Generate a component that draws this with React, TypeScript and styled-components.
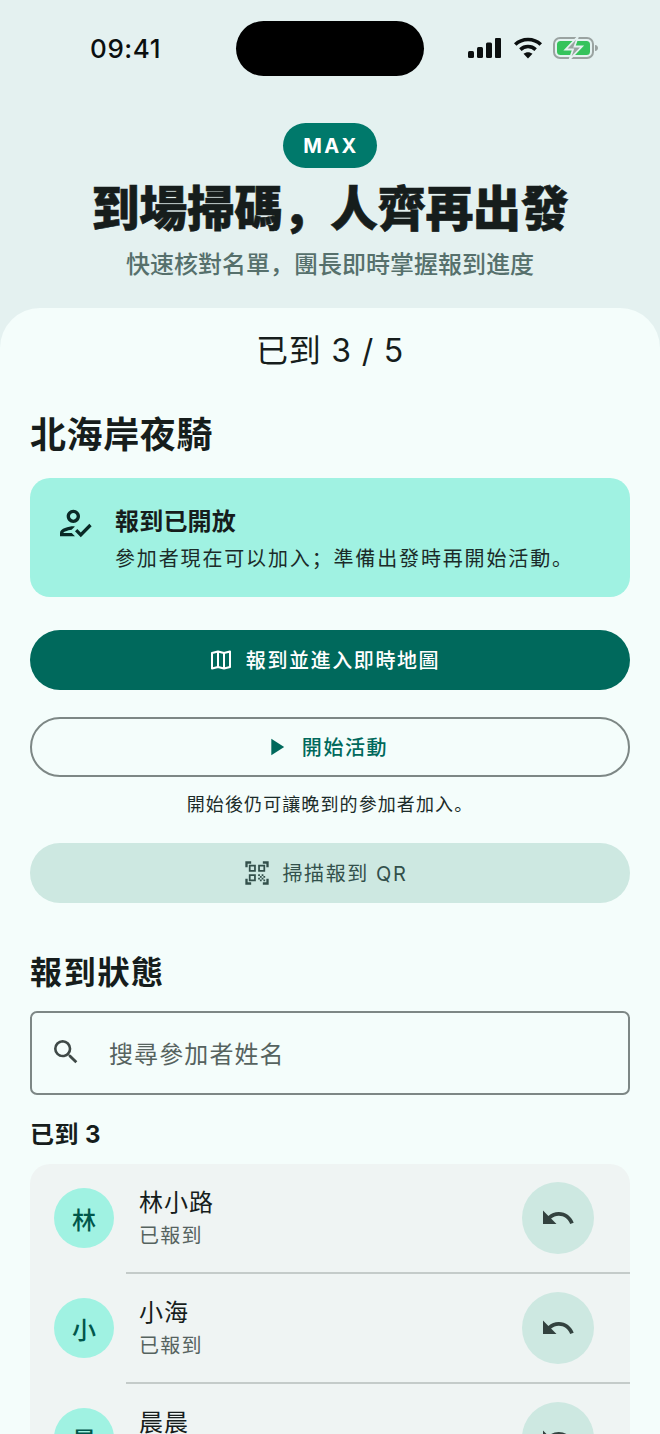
import React from "react";
import styled, { createGlobalStyle } from "styled-components";
import { MdOutlineHowToReg, MdPlayArrow, MdSearch, MdUndo, MdOutlineQrCodeScanner } from "react-icons/md";

const Global = createGlobalStyle`
  html, body { margin: 0; padding: 0; background: #e4f1f0; }
  body { width: 660px; height: 1434px; overflow: hidden; }
  * { box-sizing: border-box; }
`;
const FONT = `Inter, "Noto Sans CJK SC", sans-serif`;
const COMMA = "\uFF0C";
const SEMI = "\uFF1B";

const Page = styled.div`
  width: 660px; height: 1434px; overflow: hidden; background: #e4f1f0;
  font-family: ${FONT}; color: #161d1c;
`;
const StatusBar = styled.div`
  height: 97px; padding: 21px 62px 0 90px; display: flex; align-items: flex-start;
`;
const Time = styled.div`
  font-size: 26px; font-weight: 500; line-height: 55px; color: #0b0f0f; width: 146px; letter-spacing: 0.6px;
`;
const Island = styled.div`
  width: 188px; height: 55px; border-radius: 28px; background: #000;
`;
const StatusIcons = styled.div`
  display: flex; align-items: center; gap: 11px; height: 55px; margin-left: auto; padding-bottom: 1px;
`;
const Hero = styled.header`
  display: flex; flex-direction: column; align-items: center; padding-top: 26px; height: 211px;
`;
const Badge = styled.div`
  width: 94px; height: 45px; border-radius: 23px; background: #00796b; color: #fff;
  display: flex; align-items: center; justify-content: center;
  font-size: 20px; font-weight: 700; letter-spacing: 2.4px; padding-left: 2px;
`;
const Title = styled.h1`
  margin: 7px 0 0; font-size: 48px; line-height: 68px; font-weight: 900; color: #161d1c; white-space: nowrap;
  letter-spacing: -0.3px; -webkit-text-stroke: 0.6px #161d1c;
`;
const Subtitle = styled.p`
  margin: 1px 0 0; font-size: 24px; line-height: 42px; font-weight: 500; color: #56706c; white-space: nowrap;
`;
const Sheet = styled.main`
  background: #f4fdfb; border-radius: 40px 40px 0 0; padding: 19px 30px 0; height: 1126px;
`;
const Progress = styled.div`
  text-align: center; font-size: 32px; line-height: 48px; letter-spacing: 0.8px; color: #161d1c; font-weight: 400;
`;
const EventName = styled.h2`
  margin: 35px 0 0; font-size: 36px; line-height: 50px; font-weight: 700; letter-spacing: 0.6px;
`;
const Notice = styled.section`
  margin-top: 18px; height: 119px; border-radius: 20px; background: #a0f2e2; display: flex; padding: 25px 0 0 25px; gap: 20px;
`;
const NoticeIcon = styled(MdOutlineHowToReg)`
  font-size: 40px; color: #0a2a26; flex: none; margin-top: 0;
`;
const NoticeBody = styled.div`display: flex; flex-direction: column;`;
const NoticeTitle = styled.div`
  font-size: 24px; line-height: 38px; font-weight: 700; letter-spacing: 0.2px;
`;
const NoticeText = styled.div`
  font-size: 20px; line-height: 36px; letter-spacing: 1.85px; white-space: nowrap; color: #1b2b29;
`;
const Button = styled.div<{ $variant: "filled" | "outline" | "tonal" }>`
  height: 60px; border-radius: 30px; display: flex; align-items: center; justify-content: center; gap: 14px;
  font-size: 20px; letter-spacing: 1.6px; padding: 0 10px 1px 0;
  ${(p) =>
    p.$variant === "filled"
      ? "background:#00695c;color:#fff;margin-top:33px;font-weight:500;"
      : p.$variant === "outline"
      ? "background:transparent;color:#00695c;border:2px solid #7d8785;margin-top:27px;font-weight:500;gap:12px;"
      : "background:#cde8e1;color:#33504b;margin-top:0;font-weight:400;gap:12px;"}
  svg { flex: none; }
`;
const Hint = styled.p`
  margin: 16px 0 26px; text-align: center; font-size: 18px; line-height: 24px; letter-spacing: 1.1px; color: #1b2b29;
`;
const SectionTitle = styled.h2`
  margin: 46px 0 0; font-size: 32px; line-height: 48px; font-weight: 700; letter-spacing: 1.7px;
`;
const Search = styled.div`
  margin-top: 14px; height: 84px; border: 2px solid #7d8785; border-radius: 7px; display: flex; align-items: center; padding: 0 0 2px 18px; gap: 27px;
  font-size: 24px; letter-spacing: 1.1px; color: #56635f;
  svg { color: #3f4947; }
`;
const GroupLabel = styled.h3`
  margin: 20px 0 0; font-size: 24px; line-height: 40px; font-weight: 700; letter-spacing: 0.4px;
`;
const List = styled.div`
  margin-top: 9px; background: #eff4f3; border-radius: 20px 20px 0 0; overflow: hidden;
`;
const Row = styled.div`
  height: 110px; display: flex; align-items: center; padding: 0 36px 2px 24px; position: relative;
  &:not(:last-child)::after {
    content: ""; position: absolute; left: 96px; right: 0; top: 108px; height: 2px; background: #c4cbc9;
  }
`;
const Avatar = styled.div`
  width: 60px; height: 60px; border-radius: 50%; background: #a0f2e2; color: #00574b;
  display: flex; align-items: center; justify-content: center; font-size: 24px; font-weight: 500; flex: none;
`;
const Person = styled.div`
  flex: 1; margin-left: 25px; display: flex; flex-direction: column;
`;
const Name = styled.div`font-size: 24px; line-height: 36px; letter-spacing: 1px; color: #161d1c;`;
const State = styled.div`font-size: 20px; line-height: 30px; letter-spacing: 1.3px; color: #56635f;`;
const UndoButton = styled.div`
  width: 72px; height: 72px; border-radius: 50%; background: #cde8e1; color: #33423f;
  display: flex; align-items: center; justify-content: center; flex: none;
`;

const Signal = () => (
  <svg width="34" height="20" viewBox="0 0 34 20" fill="#0b0f0f">
    <rect x="0" y="13" width="6" height="7" rx="1.5" />
    <rect x="9" y="9" width="6" height="11" rx="1.5" />
    <rect x="18" y="4.500" width="6" height="15.5" rx="1.5" />
    <rect x="27" y="0" width="6" height="20" rx="1" />
  </svg>
);
const Wifi = () => (
  <svg width="30" height="22" viewBox="0 0 28 21" fill="none" stroke="#0b0f0f" strokeWidth="3.400" style={{ marginRight: -1 }}>
    <path d="M1.800 7.200C8.500 .8 19.500 .8 26.200 7.200" />
    <path d="M6.700 12C10.800 8.200 17.200 8.200 21.300 12" />
    <path d="M14 20.500l-4.300-4.400c2.400-2 6.200-2 8.600 0z" fill="#0b0f0f" stroke="none" />
  </svg>
);
const Battery = () => (
  <svg width="45" height="24" viewBox="0 0 45 24">
    <rect x="1" y="2" width="39" height="20" rx="6" fill="none" stroke="#9aa3a1" strokeWidth="2" />
    <rect x="4" y="5" width="33" height="14" rx="3.500" fill="#35c35c" />
    <path d="M42 9c2 0 3 1.500 3 3s-1 3-3 3z" fill="#9aa3a1" />
    <path d="M25 0.500L12.500 13.500h7.500L16.500 23.500 29 10.500h-7.500z" fill="#9aa3a1" stroke="#e4f1f0" strokeWidth="1.800" />
  </svg>
);
const MapIcon = () => (
  <svg width="22" height="22" viewBox="0 0 22 22" fill="none" stroke="currentColor" strokeWidth="2" strokeLinejoin="round">
    <path d="M2 4 8 2.500 14 4 20 2.500V18L14 19.500 8 18 2 19.500z" />
    <path d="M8 2.500V18M14 4V19.500" />
  </svg>
);

const attendees = [
  { initial: "林", name: "林小路" },
  { initial: "小", name: "小海" },
  { initial: "晨", name: "晨晨" },
];

export default function App() {
  return (
    <Page>
      <Global />
      <StatusBar>
        <Time>09:41</Time>
        <Island />
        <StatusIcons>
          <Signal />
          <Wifi />
          <Battery />
        </StatusIcons>
      </StatusBar>
      <Hero>
        <Badge>MAX</Badge>
        <Title>{`到場掃碼${COMMA}人齊再出發`}</Title>
        <Subtitle>{`快速核對名單${COMMA}團長即時掌握報到進度`}</Subtitle>
      </Hero>
      <Sheet>
        <Progress>已到 3 / 5</Progress>
        <EventName>北海岸夜騎</EventName>
        <Notice>
          <NoticeIcon />
          <NoticeBody>
            <NoticeTitle>報到已開放</NoticeTitle>
            <NoticeText>{`參加者現在可以加入${SEMI}準備出發時再開始活動。`}</NoticeText>
          </NoticeBody>
        </Notice>
        <Button $variant="filled">
          <MapIcon />
          報到並進入即時地圖
        </Button>
        <Button $variant="outline">
          <MdPlayArrow size={28} />
          開始活動
        </Button>
        <Hint>開始後仍可讓晚到的參加者加入。</Hint>
        <Button $variant="tonal">
          <MdOutlineQrCodeScanner size={28} />
          掃描報到 QR
        </Button>
        <SectionTitle>報到狀態</SectionTitle>
        <Search>
          <MdSearch size={32} />
          <span>搜尋參加者姓名</span>
        </Search>
        <GroupLabel>已到 3</GroupLabel>
        <List>
          {attendees.map((a) => (
            <Row key={a.name}>
              <Avatar>{a.initial}</Avatar>
              <Person>
                <Name>{a.name}</Name>
                <State>已報到</State>
              </Person>
              <UndoButton>
                <MdUndo size={36} />
              </UndoButton>
            </Row>
          ))}
        </List>
      </Sheet>
    </Page>
  );
}
